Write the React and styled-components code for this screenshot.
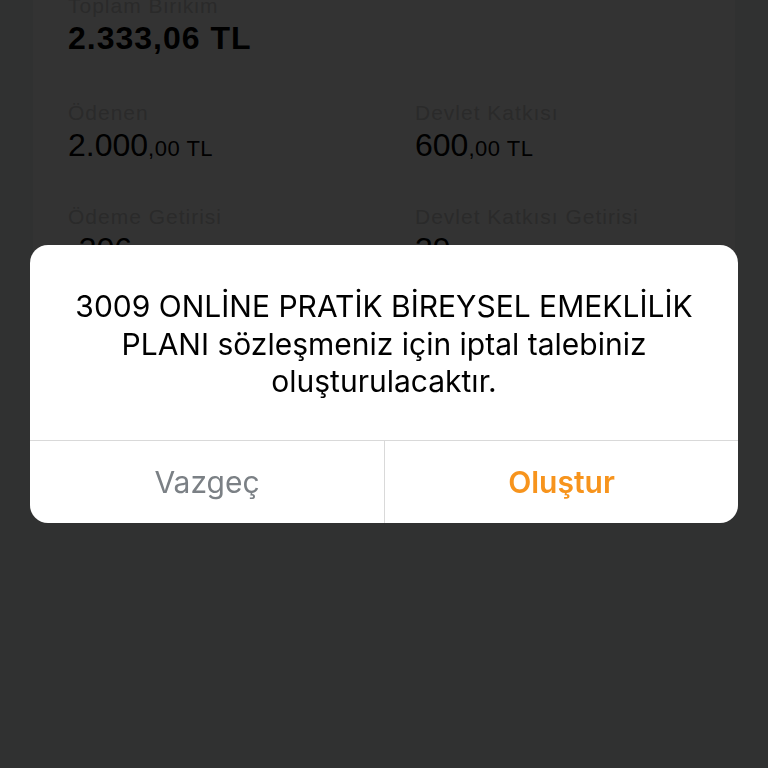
import React from 'react'
import styled, { createGlobalStyle } from 'styled-components'

const GlobalStyle = createGlobalStyle`
    html, body {
        margin: 0;
        padding: 0;
        background: #f0f5f3;
        height: 100%;
        overflow: hidden;
    }
    #root {
        height: 100%;
    }
`

const Page = styled.div`
    height: 768px;
    padding: 0 33px;
    box-sizing: border-box;
    font-family: "Liberation Sans", Arial, sans-serif;
`

const Card = styled.div`
    background: #ffffff;
    height: 420px;
    margin-top: -7px;
    padding: 0 35px;
    box-sizing: border-box;
`

const Total = styled.div`
    padding-bottom: 43px;
`

const Grid = styled.div`
    display: grid;
    grid-template-columns: 347px 1fr;
    row-gap: 36px;
`

const Label = styled.div`
    font-size: 21px;
    line-height: 26px;
    letter-spacing: 1px;
    color: #d0d0d0;
`

const Value = styled.div`
    font-size: 32px;
    font-weight: ${p => (p.$big ? 700 : 400)};
    letter-spacing: ${p => (p.$big ? '1px' : '0')};
    line-height: 38px;
    color: #000;
    & small {
        font-size: 22px;
        letter-spacing: 0.5px;
    }
`

const Overlay = styled.div`
    position: fixed;
    inset: 0;
    background: rgba(0, 0, 0, 0.8);
    display: flex;
    align-items: center;
    justify-content: center;
    padding: 0 30px;
`

const Dialog = styled.div`
    width: 100%;
    background: #fff;
    border-radius: 18px;
    overflow: hidden;
    font-family: Inter, "Noto Sans", sans-serif;
`

const Message = styled.p`
    margin: 0;
    padding: 43px 20px 39px;
    text-align: center;
    font-size: 30px;
    line-height: 37.5px;
    color: #000;
`

const Actions = styled.div`
    display: grid;
    grid-template-columns: 1fr 1fr;
    border-top: 1px solid #d9d9d9;
`

const Action = styled.button`
    height: 82px;
    border: none;
    background: transparent;
    font-family: inherit;
    font-size: 30px;
    font-weight: ${p => (p.$primary ? 600 : 400)};
    color: ${p => (p.$primary ? '#f7941d' : '#7b8085')};
    & + & {
        border-left: 1px solid #d9d9d9;
    }
`

const Field = ({ label, main, cents }) => (
    <div>
        <Label>{label}</Label>
        <Value>{main}<small>{cents}</small></Value>
    </div>
)

const App = () => {
    return (
        <>
            <GlobalStyle />
            <Page>
                <Card>
                    <Total>
                        <Label>Toplam Birikim</Label>
                        <Value $big>2.333,06 TL</Value>
                    </Total>
                    <Grid>
                        <Field label="Ödenen" main="2.000" cents=",00 TL" />
                        <Field label="Devlet Katkısı" main="600" cents=",00 TL" />
                        <Field label="Ödeme Getirisi" main="-306" cents=",17 TL" />
                        <Field label="Devlet Katkısı Getirisi" main="39" cents=",23 TL" />
                    </Grid>
                </Card>
            </Page>
            <Overlay>
                <Dialog>
                    <Message>
                        3009 ONLİNE PRATİK BİREYSEL EMEKLİLİK<br />
                        PLANI sözleşmeniz için iptal talebiniz<br />
                        oluşturulacaktır.
                    </Message>
                    <Actions>
                        <Action>Vazgeç</Action>
                        <Action $primary>Oluştur</Action>
                    </Actions>
                </Dialog>
            </Overlay>
        </>
    )
}

export default App
